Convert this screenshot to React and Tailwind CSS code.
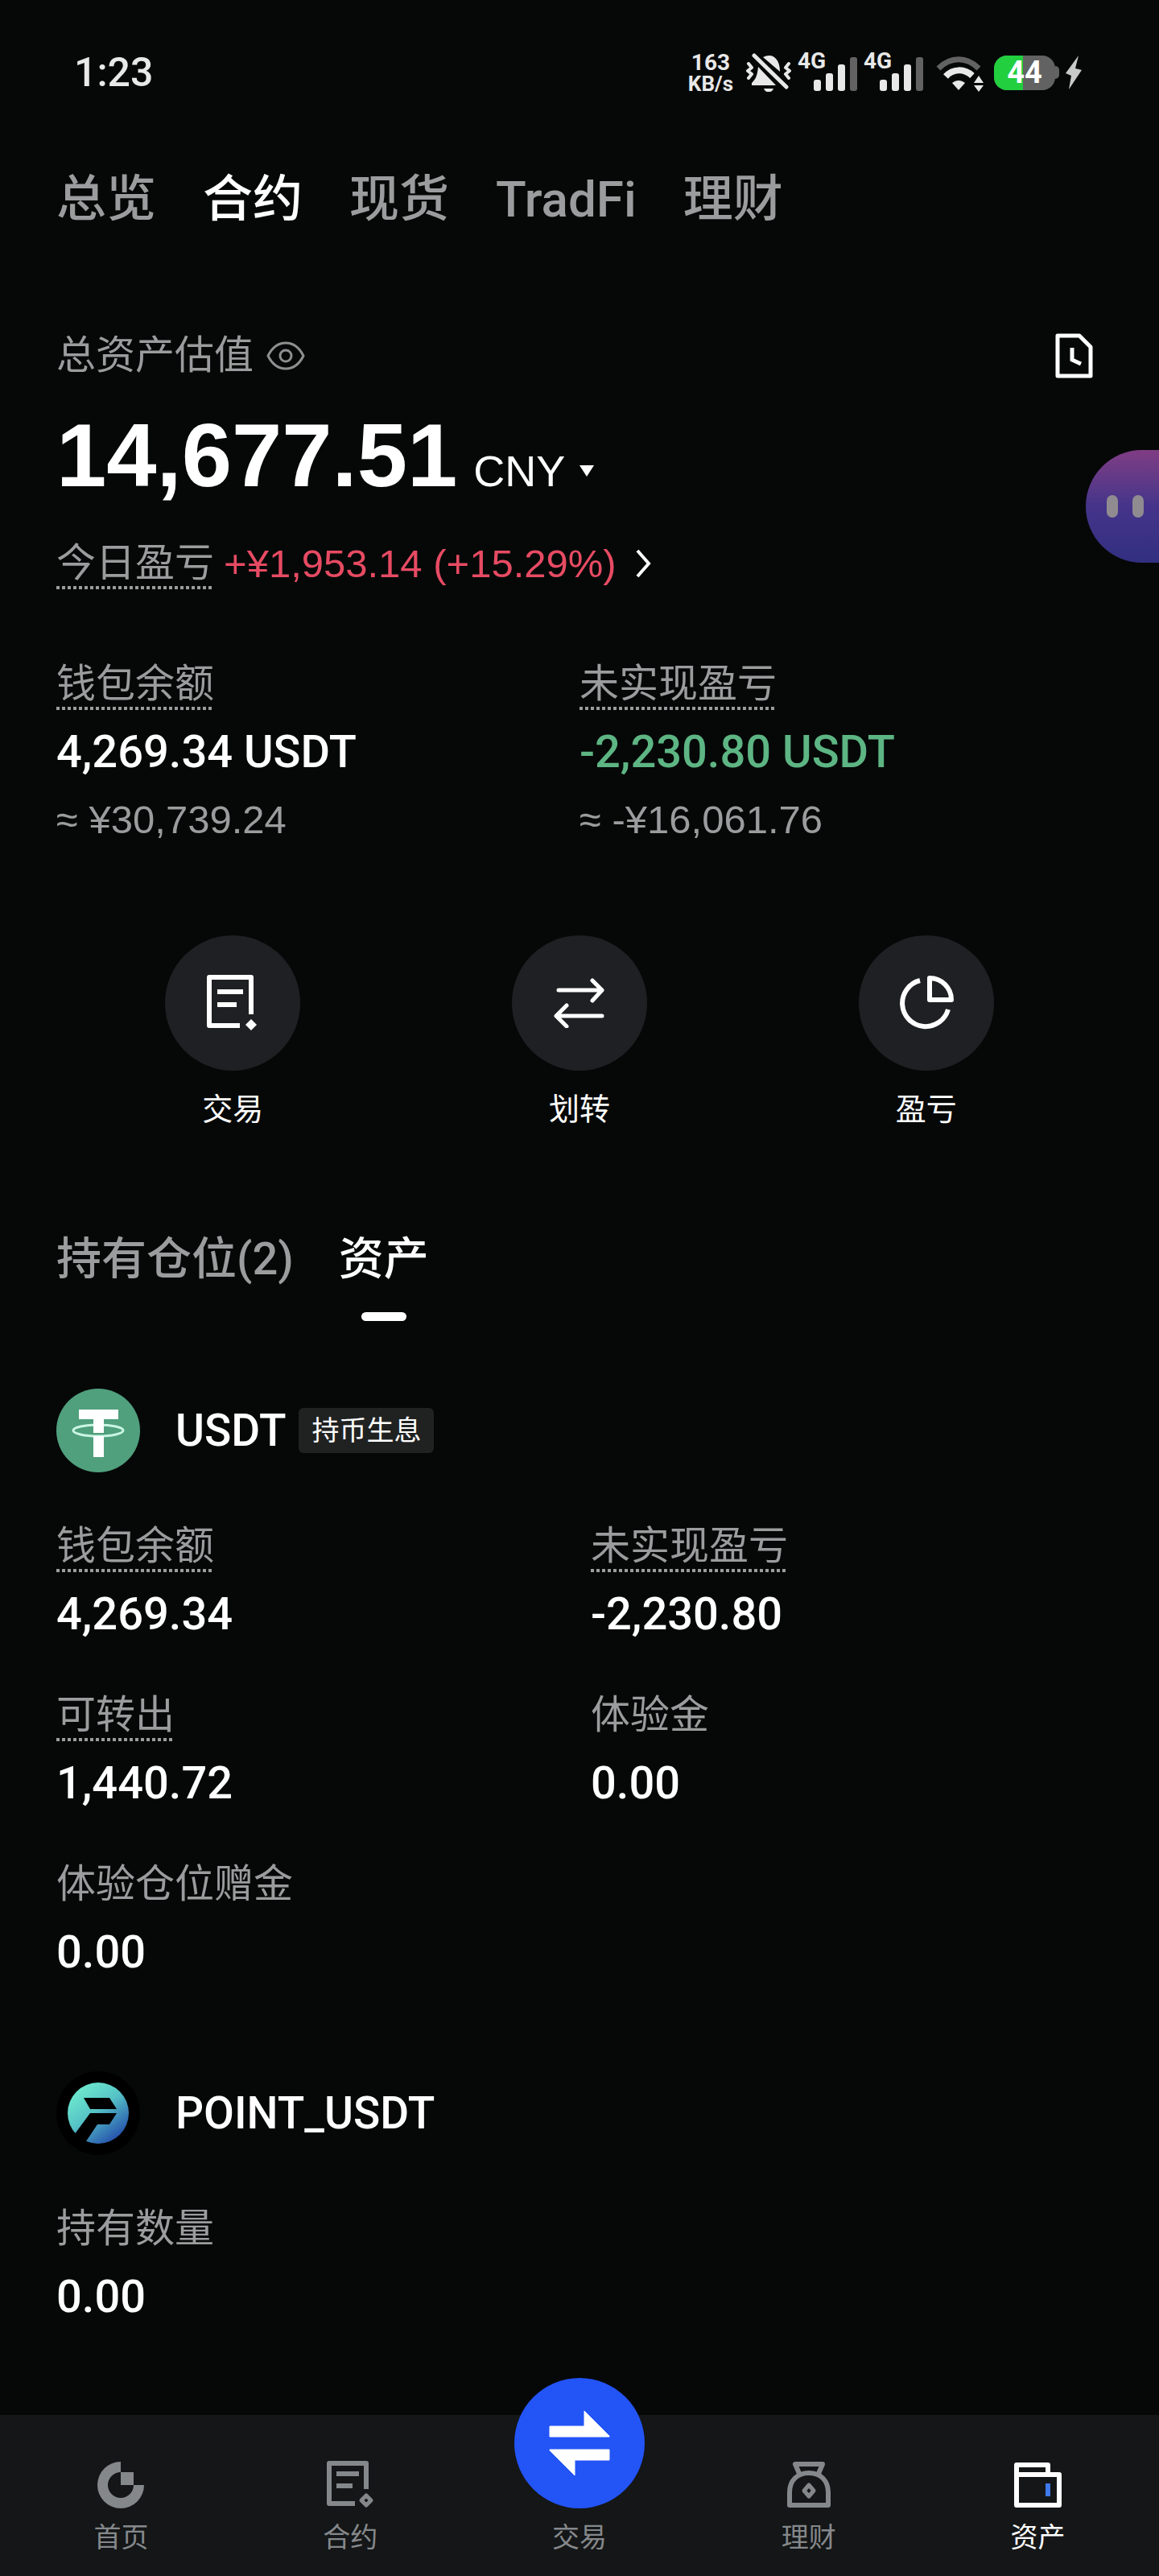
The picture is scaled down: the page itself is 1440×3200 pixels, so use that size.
import React, { useState } from 'react';
import clsx from 'clsx';

const accountTabs = ['总览', '合约', '现货', 'TradFi', '理财'];

const usdtFields = [
  { label: '钱包余额', value: '4,269.34', hint: true },
  { label: '未实现盈亏', value: '-2,230.80', hint: true },
  { label: '可转出', value: '1,440.72', hint: true },
  { label: '体验金', value: '0.00' },
  { label: '体验仓位赠金', value: '0.00' },
];

/* ---------- Status bar ---------- */

const BellOffIcon = () => (
  <svg className="w-14 h-12" viewBox="0 0 56 48" fill="none">
    <path d="M15 17C14 28 12 32 7 37V40H37Z" fill="#e8e8e8" />
    <path d="M21 5C32-1 42 6 42 23Z" fill="#e8e8e8" />
    <path d="M22 44H34C32 50 24 50 22 44Z" fill="#e8e8e8" />
    <path d="M10 3L50 42" stroke="#e8e8e8" strokeWidth="5" strokeLinecap="round" />
    <path d="M3 13L7 18L2 22L7 26L3 31" stroke="#e8e8e8" strokeWidth="4" strokeLinecap="round" strokeLinejoin="round" />
    <path d="M53 13L49 18L54 22L49 26L53 31" stroke="#e8e8e8" strokeWidth="4" strokeLinecap="round" strokeLinejoin="round" />
  </svg>
);

const Signal = () => (
  <div className="relative h-12 w-[74px]">
    <span className="absolute left-0 top-0 text-[28px] leading-5 font-bold">4G</span>
    <svg className="h-12 w-[74px]" viewBox="0 0 74 48">
      <rect x="20" y="33" width="9" height="14" rx="3" fill="#e8e8e8" />
      <rect x="35" y="25" width="9" height="22" rx="3" fill="#e8e8e8" />
      <rect x="50" y="14" width="9" height="33" rx="3" fill="#e8e8e8" />
      <rect x="65" y="5" width="9" height="42" rx="3" fill="#626262" />
    </svg>
  </div>
);

const WifiIcon = () => (
  <svg className="w-[60px] h-12" viewBox="0 0 60 48" fill="none">
    <path d="M3 19C18 4 38 4 53 19" stroke="#626262" strokeWidth="7" />
    <path d="M12 29C21 19 35 19 45 28" stroke="#e8e8e8" strokeWidth="8" />
    <path d="M20 37C25 33 31 33 36 37L28 46Z" fill="#e8e8e8" />
    <path d="M53 28L59 37H47Z" fill="#e8e8e8" />
    <path d="M53 48L59 40H47Z" fill="#e8e8e8" />
  </svg>
);

const Battery = () => (
  <div className="flex items-center">
    <div className="relative flex h-[43px] w-[76px] items-center justify-center overflow-hidden rounded-2xl bg-[#626262]">
      <div className="absolute inset-y-0 left-0 w-9 bg-[#22cf3f]" />
      <span className="relative text-[38px] leading-10 font-bold text-white">44</span>
    </div>
    <div className="h-4 w-[5px] rounded-r-md bg-[#626262]" />
  </div>
);

const BoltIcon = () => (
  <svg className="w-5 h-[42px]" viewBox="0 0 20 42">
    <path d="M16 0L0 22L7 25L4 42L20 18L12 16Z" fill="#c9c9c9" />
  </svg>
);

const StatusBar = () => (
  <header className="flex h-44 items-center justify-between pl-[92px] pr-24 pt-1 text-[#e8e8e8]">
    <time className="text-[50px] leading-[56px] font-medium">1:23</time>
    <div className="flex items-center gap-2">
      <div className="mr-2 text-center font-bold">
        <div className="text-[28px] leading-7">163</div>
        <div className="text-[26px] leading-6">KB/s</div>
      </div>
      <BellOffIcon />
      <Signal />
      <Signal />
      <div className="ml-2 mr-1"><WifiIcon /></div>
      <Battery />
      <BoltIcon />
    </div>
  </header>
);

/* ---------- Icons ---------- */

const EyeIcon = () => (
  <svg className="w-12 h-9" viewBox="0 0 48 36" fill="none" stroke="#8d8f90" strokeWidth="3">
    <path d="M2 18C7 8 15 2 24 2S41 8 46 18C41 28 33 34 24 34S7 28 2 18Z" strokeLinejoin="round" />
    <circle cx="24" cy="18" r="7" />
  </svg>
);

const HistoryIcon = () => (
  <svg className="w-[47px] h-14" viewBox="0 0 47 56" fill="none" stroke="#fff" strokeWidth="5">
    <path d="M3 3H30L44 17V53H3Z" strokeLinejoin="round" />
    <path d="M21 18V33L32 38" />
  </svg>
);

const ChevronIcon = () => (
  <svg className="w-5 h-9" viewBox="0 0 20 36" fill="none" stroke="#fff" strokeWidth="4">
    <path d="M2 2L16 18L2 34" />
  </svg>
);

const TradeIcon = () => (
  <svg className="w-16 h-[70px]" viewBox="0 0 64 70" fill="none" stroke="#fff" strokeWidth="6">
    <path d="M41 63H3V3H55V49" strokeLinejoin="round" />
    <path d="M13 21H45M13 37H37" />
    <path d="M55 55L62 62L55 69L48 62Z" fill="#fff" stroke="none" />
  </svg>
);

const TransferIcon = () => (
  <svg className="w-16 h-[62px]" viewBox="0 0 64 62" fill="none" stroke="#fff" strokeWidth="5" strokeLinecap="round" strokeLinejoin="round">
    <path d="M6 15H60M48 3L60 15L48 28" />
    <path d="M60 47H3M16 34L3 47L16 60" />
  </svg>
);

const PieIcon = () => (
  <svg className="w-[68px] h-[68px]" viewBox="0 0 68 68" fill="none" stroke="#fff" strokeWidth="6" strokeLinejoin="round">
    <path d="M26 6A29 29 0 1 0 61 42" />
    <path d="M38 3V30H65A27 27 0 0 0 38 3Z" />
  </svg>
);

const UsdtLogo = () => (
  <svg className="w-26 h-26" viewBox="0 0 104 104" fill="none">
    <circle cx="52" cy="52" r="52" fill="#509f7d" />
    <ellipse cx="52" cy="52" rx="31" ry="7" stroke="#c9f5e3" strokeWidth="3" />
    <rect x="28" y="26" width="49" height="12" fill="#fff" />
    <rect x="46" y="26" width="13" height="29" fill="#fff" />
    <rect x="46" y="59" width="13" height="26" fill="#fff" />
  </svg>
);

const PointLogo = () => (
  <svg className="w-26 h-26" viewBox="0 0 104 104">
    <defs>
      <linearGradient id="point" x1="0.2" y1="0.1" x2="0.8" y2="0.9">
        <stop offset="0" stopColor="#6ce8cd" />
        <stop offset="0.45" stopColor="#56c3c6" />
        <stop offset="1" stopColor="#2755ad" />
      </linearGradient>
    </defs>
    <circle cx="52" cy="52" r="52" fill="#000" />
    <circle cx="52" cy="52" r="38" fill="url(#point)" />
    <path d="M34 33H66L75 47H42Z" fill="#000" />
    <path d="M42 52H75L66 66H51L35 90H14Z" fill="#000" />
  </svg>
);

const HomeIcon = () => (
  <svg className="w-[58px] h-[58px]" viewBox="0 0 58 58" fill="currentColor">
    <path d="M29 0A29 29 0 1 0 58 29H45A16 16 0 1 1 29 13Z" />
    <rect x="29" y="13" width="16" height="16" />
  </svg>
);

const ContractIcon = () => (
  <svg className="w-[60px] h-[60px]" viewBox="0 0 60 60" fill="none" stroke="currentColor" strokeWidth="6">
    <path d="M36 54H4V4H50V36" strokeLinejoin="round" />
    <path d="M13 17H41M13 32H33" />
    <path d="M50 44L56 50L50 56L44 50Z" strokeWidth="5" strokeLinejoin="round" />
  </svg>
);

const BagIcon = () => (
  <svg className="w-[56px] h-[58px]" viewBox="0 0 56 58" fill="none" stroke="currentColor" strokeWidth="6" strokeLinejoin="round">
    <path d="M4 54V38C4 24 13 14 28 14S52 24 52 38V54Z" />
    <path d="M17 17L11 3H45L39 17" />
    <path d="M28 29L34 36L28 43L22 36Z" strokeWidth="5" />
  </svg>
);

const WalletIcon = () => (
  <svg className="w-[60px] h-[58px]" viewBox="0 0 60 58" fill="none" stroke="currentColor" strokeWidth="6" strokeLinejoin="round">
    <path d="M3 16V4H42V16" />
    <path d="M3 16H56V54H3Z" />
    <path d="M42 27V43" stroke="#3f78ea" />
  </svg>
);

const SwapIcon = () => (
  <svg className="w-19 h-[84px]" viewBox="0 0 76 84" fill="#fff" stroke="#fff" strokeLinejoin="round">
    <path d="M1 21H44V2L75 33V34H1Z" />
    <path d="M75 50H1V51L32 82V63H75Z" />
  </svg>
);

/* ---------- Building blocks ---------- */

const HintLabel = ({ children, hint }) => (
  <span
    className={clsx(
      'inline-block pb-1 text-[49px] leading-[56px] text-[#9a9c9d]',
      hint && 'bg-[linear-gradient(90deg,#9a9c9d_4px,transparent_4px)] bg-[length:7px_4px] bg-bottom-left bg-repeat-x'
    )}
  >
    {children}
  </span>
);

const Field = ({ label, value, hint, approx, className = 'text-white' }) => (
  <div>
    <dt className="flex"><HintLabel hint={hint}>{label}</HintLabel></dt>
    <dd className={clsx('mt-5 text-[56px] leading-16 font-medium', className)}>{value}</dd>
    {approx && (
      <dd className="mt-6 font-['Liberation_Sans',sans-serif] text-[49px] leading-[56px] text-[#9a9c9d]">≈ {approx}</dd>
    )}
  </div>
);

const Action = ({ icon, label }) => (
  <button className="flex flex-1 flex-col items-center gap-6">
    <span className="flex h-42 w-42 items-center justify-center rounded-full bg-[#1f2023]">{icon}</span>
    <span className="text-[38px] leading-12">{label}</span>
  </button>
);

const NavItem = ({ icon, label, active }) => (
  <a href="#" className={clsx('flex flex-1 flex-col items-center gap-4', active ? 'text-white' : 'text-[#85888b]')}>
    {icon}
    <span className="text-[34px] leading-10">{label}</span>
  </a>
);

const App = () => {
  const [tab, setTab] = useState('合约');

  return (
    <div className="relative flex min-h-screen flex-col overflow-hidden bg-[#060808] font-[Roboto,'Noto_Sans_CJK_SC',sans-serif] text-white">
      <StatusBar />

      <main className="flex-1 px-[70px]">
        <nav className="mt-9 flex gap-[58px]">
          {accountTabs.map((name) => (
            <button
              key={name}
              onClick={() => setTab(name)}
              className={clsx('text-[62px] leading-18 font-medium', tab === name ? 'text-white' : 'text-[#9a9c9d]')}
            >
              {name}
            </button>
          ))}
        </nav>

        {/* Total value */}
        <section className="mt-[130px]">
          <div className="flex items-center justify-between">
            <div className="flex items-center gap-4">
              <h2 className="text-[49px] leading-[56px] text-[#9a9c9d]">总资产估值</h2>
              <button aria-label="隐藏金额"><EyeIcon /></button>
            </div>
            <button aria-label="历史记录" className="mr-3"><HistoryIcon /></button>
          </div>
          <div className="mt-10 flex items-baseline font-['Liberation_Sans',sans-serif]">
            <span className="text-[112px] leading-28 font-bold">14,677.51</span>
            <label className="ml-5 flex items-center gap-4">
              <select aria-label="货币" className="appearance-none text-[54px] leading-16">
                <option>CNY</option>
              </select>
              <svg className="w-5 h-3.5" viewBox="0 0 20 14"><path d="M1 0H19L10 14Z" fill="#fff" /></svg>
            </label>
          </div>
          <div className="mt-[50px] flex items-start">
            <HintLabel hint>今日盈亏</HintLabel>
            <a
              href="#"
              className="ml-3 flex items-center gap-6 font-['Liberation_Sans',sans-serif] text-[49px] leading-[56px] text-[#e74b63]"
            >
              +¥1,953.14 (+15.29%)
              <ChevronIcon />
            </a>
          </div>
        </section>

        <dl className="mt-[90px] grid grid-cols-2">
          <Field label="钱包余额" value="4,269.34 USDT" approx="¥30,739.24" hint />
          <Field label="未实现盈亏" value="-2,230.80 USDT" approx="-¥16,061.76" hint className="text-[#5db583]" />
        </dl>

        <div className="mt-29 flex px-1">
          <Action icon={<TradeIcon />} label="交易" />
          <Action icon={<TransferIcon />} label="划转" />
          <Action icon={<PieIcon />} label="盈亏" />
        </div>

        <div className="mt-[130px] flex gap-14 text-[56px] leading-16 font-medium">
          <button className="self-start text-[#9a9c9d]">持有仓位(2)</button>
          <button className="flex flex-col items-center">
            资产
            <span className="mt-[34px] h-[11px] w-14 rounded-full bg-white" />
          </button>
        </div>

        {/* Coins */}
        <section className="mt-21">
          <div className="flex items-center">
            <UsdtLogo />
            <h3 className="ml-11 text-[55px] leading-16 font-medium">USDT</h3>
            <span className="ml-4 rounded-md bg-[#202222] px-4 text-[34px] leading-14">持币生息</span>
          </div>
          <dl className="mt-16 grid grid-cols-2 gap-x-7 gap-y-[66px]">
            {usdtFields.map((field) => (
              <Field key={field.label} {...field} />
            ))}
          </dl>
        </section>

        <section className="mt-29 pb-28">
          <div className="flex items-center">
            <PointLogo />
            <h3 className="ml-11 text-[55px] leading-16 font-medium">POINT_USDT</h3>
          </div>
          <dl className="mt-16">
            <Field label="持有数量" value="0.00" />
          </dl>
        </section>
      </main>

      {/* Assistant bubble peeking in from the right edge */}
      <button
        aria-label="助手"
        className="absolute right-0 top-[559px] flex h-35 w-[91px] items-center gap-[18px] rounded-l-full bg-linear-to-b from-[#803c84] via-[#44348a] to-[#322f80] pl-[26px]"
      >
        <span className="h-7 w-[14px] rounded-full bg-[#8f8b90]" />
        <span className="h-7 w-[14px] rounded-full bg-[#8f8b90]" />
      </button>

      <nav className="flex items-end bg-[#141617] px-2 pb-7 pt-[55px]">
        <NavItem icon={<HomeIcon />} label="首页" />
        <NavItem icon={<ContractIcon />} label="合约" />
        <NavItem
          icon={<span className="-mt-[101px] flex h-[162px] w-[162px] items-center justify-center rounded-full bg-[#2354f6]"><SwapIcon /></span>}
          label="交易"
        />
        <NavItem icon={<BagIcon />} label="理财" />
        <NavItem icon={<WalletIcon />} label="资产" active />
      </nav>
    </div>
  );
};

export default App;
